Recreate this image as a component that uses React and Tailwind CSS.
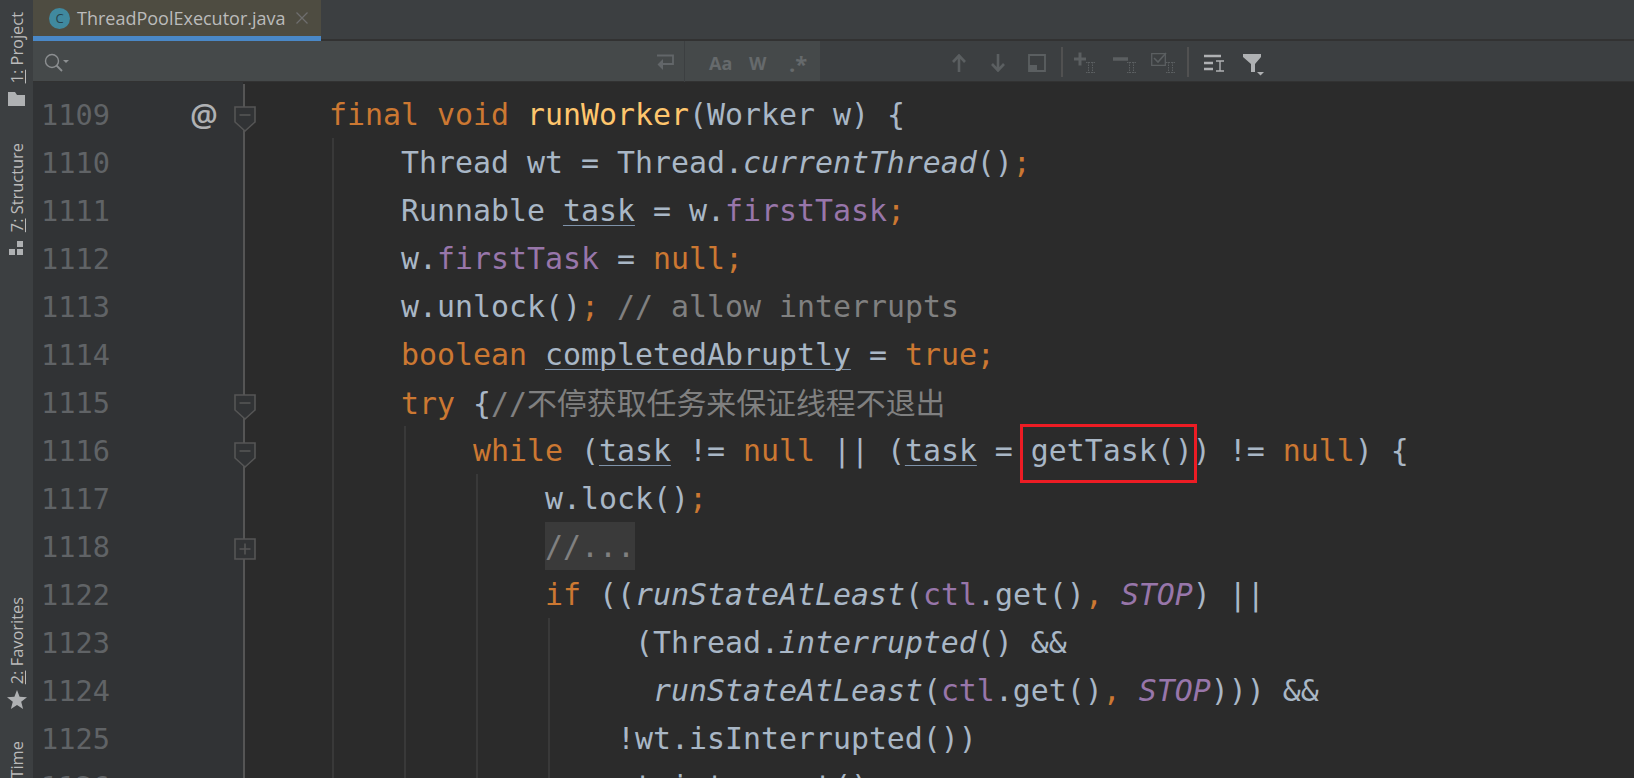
const mono = "font-['DejaVu_Sans_Mono','Liberation_Mono',monospace]";

const K = ({ children }) => <span className="text-[#cc7832]">{children}</span>;
const F = ({ children }) => <span className="text-[#9876aa]">{children}</span>;
const C = ({ children }) => <span className="text-[#808080]">{children}</span>;
const I = ({ children }) => <span className="italic">{children}</span>;
const U = ({ children }) => <span className="underline decoration-[#7f93aa] decoration-1 underline-offset-[4px]">{children}</span>;

const FoldOpen = () => (
  <svg width="22" height="27" viewBox="0 0 22 27" className="absolute left-[201px] top-[16px]">
    <path d="M1 1H21V16L11 25L1 16Z" fill="#313335" stroke="#555" strokeWidth="1.6" />
    <path d="M5.5 9H16.5" stroke="#555" strokeWidth="1.6" />
  </svg>
);
const FoldClosed = () => (
  <svg width="22" height="22" viewBox="0 0 22 22" className="absolute left-[201px] top-[16px]">
    <path d="M1 1H21V21H1Z" fill="#313335" stroke="#555" strokeWidth="1.6" />
    <path d="M5.5 11H16.5M11 5.5V16.5" stroke="#555" strokeWidth="1.6" />
  </svg>
);

const guides = {
  g1: "left-[299px]",
  g2: "left-[371px]",
  g3: "left-[443px]",
  g4: "left-[515px]",
};

const Row = ({ n, indent, g = [], fold, at, children }) => (
  <div className="relative flex h-[48px] shrink-0 items-center">
    <div className="flex h-full w-[210px] shrink-0 items-center bg-[#313335] pl-[8px] text-[28.6px] leading-none text-[#606366]">
      <span className="mt-[2px]">{n}</span>
      {at && <span className="ml-[80px] font-['Open_Sans',sans-serif] text-[31px] font-semibold text-[#afb1b3]">@</span>}
    </div>
    <div className="h-full w-[2px] shrink-0 bg-[#555555]" />
    <div className="mt-[2px] whitespace-pre pl-[84px] text-[29.9px] leading-none text-[#a9b7c6]">
      {" ".repeat(indent)}
      {children}
    </div>
    {g.map((k) => (
      <div key={k} className={`absolute top-0 bottom-0 w-[2px] bg-[#393939] ${guides[k]}`} />
    ))}
    {fold === "open" && <FoldOpen />}
    {fold === "closed" && <FoldClosed />}
  </div>
);

const SideItem = ({ num, label, children, className = "" }) => (
  <div className={`flex flex-col items-center ${className}`}>
    <span className="rotate-180 whitespace-nowrap text-[16.4px] leading-[20px] text-[#bbbbbb] [writing-mode:vertical-rl]">
      {num && <span className="underline">{num}</span>}
      {num && " "}
      {label}
    </span>
    {children}
  </div>
);

function Sidebar() {
  return (
    <div className="flex h-full w-[33px] shrink-0 flex-col overflow-hidden bg-[#3c3f41] pt-[12px] font-['Open_Sans',sans-serif]">
      <SideItem num="1:" label="Project" className="gap-[9px]">
        <svg width="17" height="14" viewBox="0 0 17 14"><path d="M0 0H7L9 3H17V14H0Z" fill="#afb1b3" /></svg>
      </SideItem>
      <SideItem num="7:" label="Structure" className="mt-[37px] gap-[8px]">
        <svg width="15" height="14" viewBox="0 0 15 14"><path d="M8 0H14V6H8ZM0 8H6V14H0ZM8 8H14V14H8Z" fill="#afb1b3" /></svg>
      </SideItem>
      <SideItem num="2:" label="Favorites" className="mt-[342px] gap-[6px]">
        <svg width="20" height="19" viewBox="0 0 20 19"><path d="M10 0L12.6 6.7L20 7.2L14.2 11.8L16.1 19L10 15L3.9 19L5.8 11.8L0 7.2L7.4 6.7Z" fill="#afb1b3" /></svg>
      </SideItem>
      <SideItem label="Time" className="mt-[32px]" />
    </div>
  );
}

function Tabs() {
  return (
    <div className="flex h-[41px] shrink-0 border-b-[2px] border-[#323232] bg-[#3c3f41] font-['Open_Sans',sans-serif]">
      <div className="-mb-[2px] flex h-[41px] w-[288px] items-center border-b-[5px] border-[#4a88c7] bg-[#4e4c41] pl-[16px]">
        <span className="flex h-[21px] w-[21px] items-center justify-center rounded-full bg-[#40899f] text-[13px] leading-none text-[#27424a]">C</span>
        <span className="ml-[7px] text-[18px] leading-none text-[#bbbbbb]">ThreadPoolExecutor.java</span>
        <svg width="12" height="12" viewBox="0 0 12 12" className="ml-[10px]"><path d="M0.5 0.5L11.5 11.5M11.5 0.5L0.5 11.5" stroke="#6e6e6e" strokeWidth="1.3" /></svg>
      </div>
    </div>
  );
}

const Sep = ({ className }) => <div className={`h-[30px] w-[2px] bg-[#515151] ${className}`} />;

const II = () => (
  <path d="M0 0.5H9M0 10.5H9M2.5 0V11M6.5 0V11" stroke="#5b5f61" strokeWidth="1" fill="none" strokeDasharray="1.5 1" />
);

function FindBar() {
  return (
    <div className="flex h-[41px] shrink-0 border-b border-[#323232] bg-[#3c3f41] font-['Open_Sans',sans-serif]">
      <div className="flex h-full w-[787px] items-center bg-[#45494a] pl-[11px] pt-[3px]">
        <svg width="25" height="20" viewBox="0 0 25 20">
          <circle cx="8" cy="8" r="6.5" fill="none" stroke="#8c8f91" strokeWidth="1.4" />
          <path d="M12.5 12.5L18 18" stroke="#8c8f91" strokeWidth="1.8" />
          <path d="M19 7H25L22 10Z" fill="#8c8f91" />
        </svg>
        <svg width="18" height="18" viewBox="0 0 18 18" className="ml-[587px]">
          <path d="M1 1.5H17V10H6" fill="none" stroke="#626669" strokeWidth="1.8" />
          <path d="M7 5L1.5 10.5L7 16Z" fill="#626669" />
        </svg>
        <div className="-mt-[3px] ml-[10px] h-[41px] w-[1px] bg-[#3c3f41]" />
        <div className="ml-[24px] flex items-center text-[18px] font-bold leading-none text-[#666a6c]">
          <span className="w-[40px]">Aa</span>
          <span className="w-[40px]">W</span>
          <span className="text-[22px]">.*</span>
        </div>
      </div>
      <div className="flex h-full items-center pt-[3px]">
        <svg width="14" height="18" viewBox="0 0 14 18" className="ml-[132px]"><path d="M7 18V1.5M1 8L7 1.5L13 8" fill="none" stroke="#5b5f61" strokeWidth="2.6" /></svg>
        <svg width="14" height="18" viewBox="0 0 14 18" className="ml-[25px]"><path d="M7 0V16.5M1 10L7 16.5L13 10" fill="none" stroke="#5b5f61" strokeWidth="2.6" /></svg>
        <svg width="18" height="18" viewBox="0 0 18 18" className="ml-[23px]"><path d="M1 1H17V17H1Z" fill="none" stroke="#5b5f61" strokeWidth="1.8" /><path d="M1 11H9V17H1Z" fill="#5b5f61" /></svg>
        <Sep className="ml-[15px] -mt-[2px]" />
        <svg width="24" height="22" viewBox="0 0 24 22" className="ml-[11px]">
          <path d="M0 7H12M6 0.5V13.5" stroke="#5b5f61" strokeWidth="3" />
          <g transform="translate(12 10)"><II /></g>
        </svg>
        <svg width="24" height="22" viewBox="0 0 24 22" className="ml-[15px]">
          <path d="M0 7H15" stroke="#5b5f61" strokeWidth="3.5" />
          <g transform="translate(14 10)"><II /></g>
        </svg>
        <svg width="25" height="22" viewBox="0 0 25 22" className="ml-[14px]">
          <path d="M0.7 1.7H14.3V13.3H0.7Z" fill="none" stroke="#5b5f61" strokeWidth="1.3" />
          <path d="M3 6L7 10L15 1" fill="none" stroke="#5b5f61" strokeWidth="1.6" />
          <g transform="translate(15 10)"><II /></g>
        </svg>
        <Sep className="ml-[11px] -mt-[2px]" />
        <svg width="21" height="18" viewBox="0 0 21 18" className="ml-[15px]">
          <path d="M0 2H17M0 9H9M0 15H9" stroke="#afb1b3" strokeWidth="2.4" />
          <path d="M12 7H20M12 17H20M16 7V17" stroke="#afb1b3" strokeWidth="1.4" />
        </svg>
        <svg width="22" height="22" viewBox="0 0 22 22" className="ml-[18px] mt-[4px]">
          <path d="M0 0H18V3L12 10V18H8V10L0 3Z" fill="#afb1b3" />
          <path d="M14 18H21L17.5 21.5Z" fill="#afb1b3" />
        </svg>
      </div>
    </div>
  );
}

export default function App() {
  return (
    <div className="flex h-[778px] w-full overflow-hidden bg-[#2b2b2b]">
      <Sidebar />
      <div className="relative flex min-w-0 flex-1 flex-col">
        <Tabs />
        <FindBar />
        <div className={`flex flex-1 flex-col overflow-hidden ${mono}`}>
          <div className="flex h-[8px] shrink-0">
            <div className="h-full w-[210px] bg-[#313335]" />
            <div className="mt-[2px] h-full w-[2px] bg-[#555555]" />
          </div>
          <Row n="1109" indent={0} at fold="open"><K>final void </K><span className="text-[#ffc66d]">runWorker</span>(Worker w) {"{"}</Row>
          <Row n="1110" indent={4} g={["g1"]}>Thread wt = Thread.<I>currentThread</I>()<K>;</K></Row>
          <Row n="1111" indent={4} g={["g1"]}>Runnable <U>task</U> = w.<F>firstTask</F><K>;</K></Row>
          <Row n="1112" indent={4} g={["g1"]}>w.<F>firstTask</F> = <K>null;</K></Row>
          <Row n="1113" indent={4} g={["g1"]}>w.unlock()<K>;</K> <C>// allow interrupts</C></Row>
          <Row n="1114" indent={4} g={["g1"]}><K>boolean </K><U>completedAbruptly</U> = <K>true;</K></Row>
          <Row n="1115" indent={4} g={["g1"]} fold="open"><K>try </K>{"{"}<C>//<span className="font-['Noto_Sans_CJK_SC',sans-serif]">不停获取任务来保证线程不退出</span></C></Row>
          <Row n="1116" indent={8} g={["g1", "g2"]} fold="open"><K>while </K>(<U>task</U> != <K>null</K> || (<U>task</U> = getTask()) != <K>null</K>) {"{"}</Row>
          <Row n="1117" indent={12} g={["g1", "g2", "g3"]}>w.lock()<K>;</K></Row>
          <Row n="1118" indent={12} g={["g1", "g2", "g3"]} fold="closed"><span className="-mt-[2px] inline-block h-[48px] bg-[#3a3a3a] leading-[50px] text-[#808080]">//...</span></Row>
          <Row n="1122" indent={12} g={["g1", "g2", "g3"]}><K>if </K>((<I>runStateAtLeast</I>(<F>ctl</F>.get()<K>, </K><F><I>STOP</I></F>) ||</Row>
          <Row n="1123" indent={17} g={["g1", "g2", "g3", "g4"]}>(Thread.<I>interrupted</I>() &amp;&amp;</Row>
          <Row n="1124" indent={18} g={["g1", "g2", "g3", "g4"]}><I>runStateAtLeast</I>(<F>ctl</F>.get()<K>, </K><F><I>STOP</I></F>))) &amp;&amp;</Row>
          <Row n="1125" indent={16} g={["g1", "g2", "g3", "g4"]}>!wt.isInterrupted())</Row>
          <Row n="1126" indent={16} g={["g1", "g2", "g3", "g4"]}>wt.interrupt()<K>;</K></Row>
        </div>
        <div className="absolute left-[987px] top-[424px] h-[59px] w-[177px] border-[3px] border-[#ed1c24]" />
      </div>
    </div>
  );
}
